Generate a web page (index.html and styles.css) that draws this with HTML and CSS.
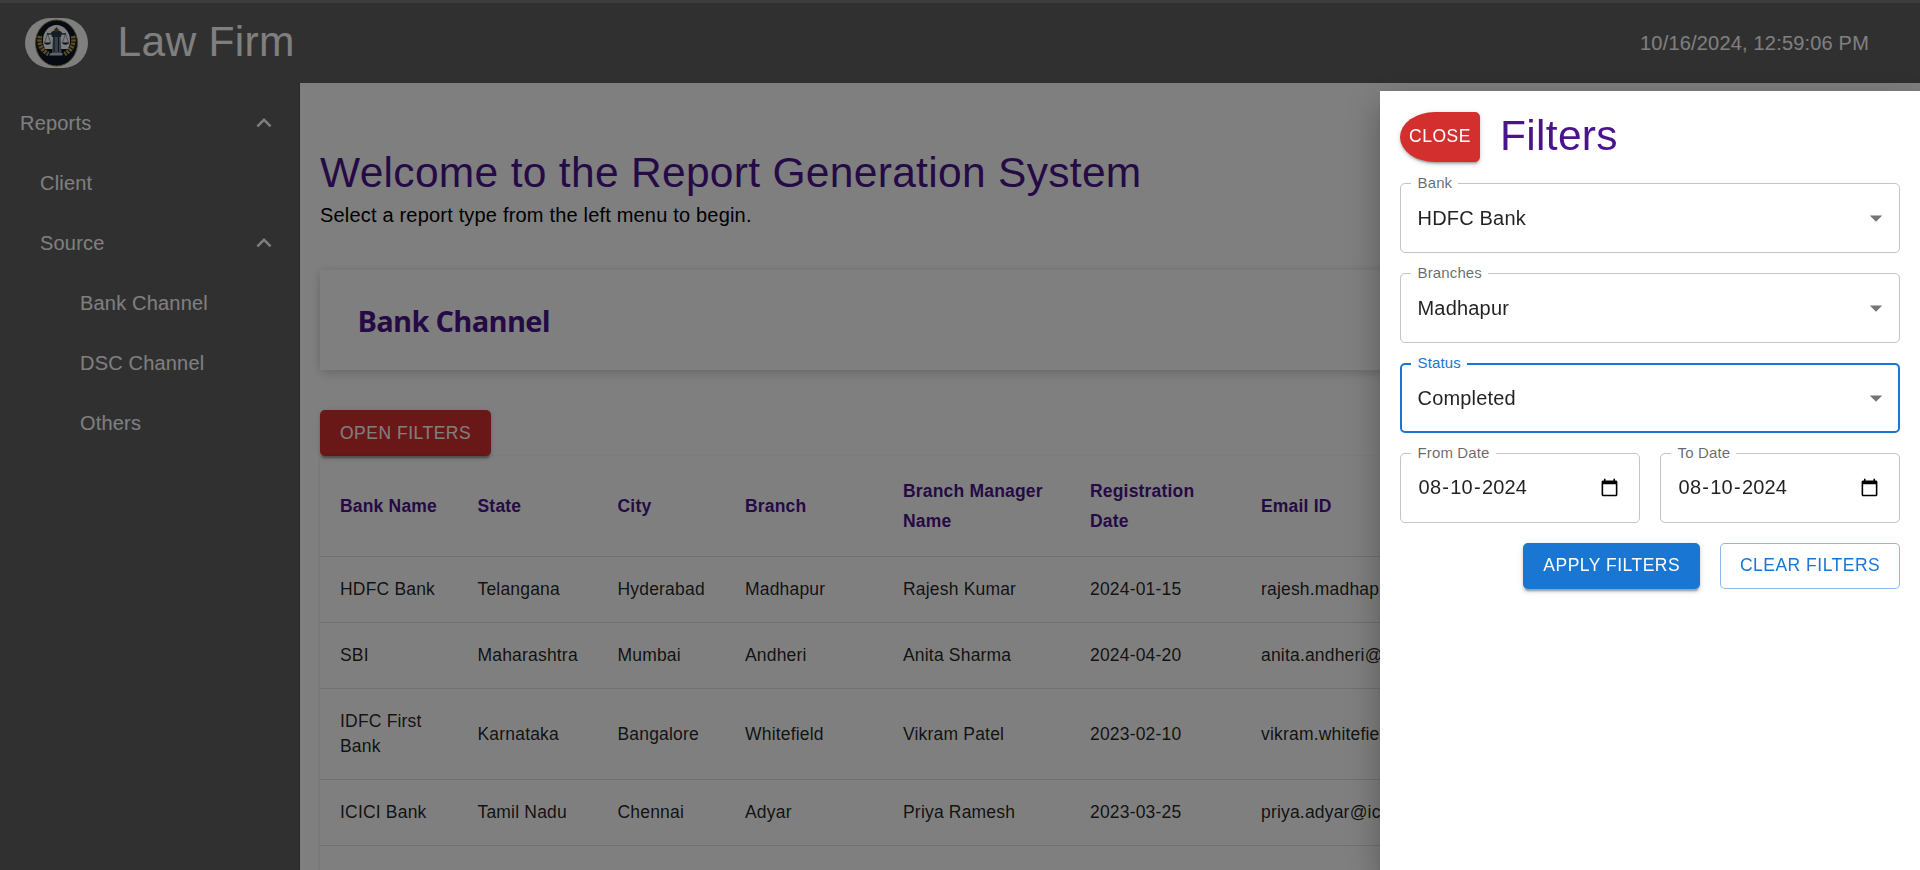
FILE: index.html
```html
<!DOCTYPE html>
<html lang="en">
<head>
<meta charset="utf-8">
<title>Law Firm</title>
<link rel="stylesheet" href="styles.css">
</head>
<body>
<div class="app">
  <header class="topbar">
    <svg class="logo" viewBox="0 0 63 50" width="63" height="50">
      <rect width="63" height="50" rx="25" fill="#fff"/>
      <ellipse cx="31.5" cy="25" rx="21" ry="23" fill="#0b1726" stroke="#8f7a45" stroke-width="1"/>
      <ellipse cx="31.5" cy="22.5" rx="13.5" ry="15.500" fill="#fff"/>
      <path d="M17.500 31h28v8h-28z" fill="#0b1726"/>
      <g fill="none" stroke="#c09a4c" stroke-width="4.500" stroke-dasharray="2.300 1">
        <path d="M15 18c-1.500 8 1 14 8.500 18"/>
        <path d="M48 18c1.500 8-1 14-8.500 18"/>
      </g>
      <path d="M28 18h7.500l1 17h-9.500z" fill="#6f8090"/>
      <path d="M29 19v15M33.500 19v15" stroke="#1a2a3c" stroke-width="1"/>
      <path d="M26 14.500c3-3 8-3 11 0l-1 4.500h-9z" fill="#2b3948"/>
      <path d="M31.500 9l2.500 3-2.500 3-2.500-3z" fill="#6b5530"/>
      <path d="M22 15.500c4 2 6-1 9.500-1s5.500 3 9.500 1" fill="none" stroke="#2b3948" stroke-width="1.500"/>
      <path d="M22.500 16l-3 8.500M22.500 16l3 8.500M40.500 16l-3 8.500M40.500 16l3 8.500" stroke="#4b5968" stroke-width=".6"/>
      <path d="M19 24.500h7c-.5 3-6.500 3-7 0zM37 24.500h7c-.5 3-6.500 3-7 0z" fill="#1a2a3c"/>
      <path d="M25.500 35h12v2.500h-13.500z" fill="#c8c8c8"/>
    </svg>
    <h1 class="brand">Law Firm</h1>
    <time class="clock">10/16/2024, 12:59:06 PM</time>
  </header>
  <div class="body">
    <nav class="sidebar">
      <a class="nav-item">Reports<svg class="chevron" viewBox="0 0 24 24"><path d="m12 8-6 6 1.410 1.410L12 10.830l4.590 4.580L18 14z"/></svg></a>
      <a class="nav-item level-1">Client</a>
      <a class="nav-item level-1">Source<svg class="chevron" viewBox="0 0 24 24"><path d="m12 8-6 6 1.410 1.410L12 10.830l4.590 4.580L18 14z"/></svg></a>
      <a class="nav-item level-2">Bank Channel</a>
      <a class="nav-item level-2">DSC Channel</a>
      <a class="nav-item level-2">Others</a>
    </nav>
    <main class="main">
      <h2 class="title">Welcome to the Report Generation System</h2>
      <p class="subtitle">Select a report type from the left menu to begin.</p>
      <section class="card"><h3 class="card-title">Bank Channel</h3></section>
      <button class="btn btn-red">Open Filters</button>
      <div class="table-wrap">
        <table class="table">
          <colgroup><col class="c-bank"><col class="c-state"><col class="c-city"><col class="c-branch"><col class="c-manager"><col class="c-date"><col class="c-email"></colgroup>
          <thead>
            <tr><th>Bank Name</th><th>State</th><th>City</th><th>Branch</th><th>Branch Manager Name</th><th>Registration Date</th><th>Email ID</th></tr>
          </thead>
          <tbody>
            <tr><td>HDFC Bank</td><td>Telangana</td><td>Hyderabad</td><td>Madhapur</td><td>Rajesh Kumar</td><td>2024-01-15</td><td>rajesh.madhap</td></tr>
            <tr><td>SBI</td><td>Maharashtra</td><td>Mumbai</td><td>Andheri</td><td>Anita Sharma</td><td>2024-04-20</td><td>anita.andheri@</td></tr>
            <tr><td>IDFC First Bank</td><td>Karnataka</td><td>Bangalore</td><td>Whitefield</td><td>Vikram Patel</td><td>2023-02-10</td><td>vikram.whitefie</td></tr>
            <tr><td>ICICI Bank</td><td>Tamil Nadu</td><td>Chennai</td><td>Adyar</td><td>Priya Ramesh</td><td>2023-03-25</td><td>priya.adyar@ic</td></tr>
          </tbody>
        </table>
      </div>
    </main>
  </div>
</div>

<div class="backdrop"></div>

<aside class="drawer">
  <div class="drawer-head">
    <button class="btn btn-red btn-close">Close</button>
    <h2 class="drawer-title">Filters</h2>
  </div>
  <div class="field">
    <span class="label">Bank</span><span class="value">HDFC Bank</span>
    <svg class="arrow" viewBox="0 0 24 24"><path d="m7 10 5 5 5-5z"/></svg>
  </div>
  <div class="field">
    <span class="label">Branches</span><span class="value">Madhapur</span>
    <svg class="arrow" viewBox="0 0 24 24"><path d="m7 10 5 5 5-5z"/></svg>
  </div>
  <div class="field focused">
    <span class="label">Status</span><span class="value">Completed</span>
    <svg class="arrow" viewBox="0 0 24 24"><path d="m7 10 5 5 5-5z"/></svg>
  </div>
  <div class="dates">
    <div class="field">
      <span class="label">From Date</span>
      <span class="value date"><span>08</span>-<span>10</span>-<span>2024</span></span>
      <svg class="calendar" viewBox="0 0 24 24"><path d="M20 3h-1V1h-2v2H7V1H5v2H4c-1.100 0-2 .9-2 2v16c0 1.100.9 2 2 2h16c1.100 0 2-.9 2-2V5c0-1.100-.9-2-2-2zm0 18H4V8h16v13z"/></svg>
    </div>
    <div class="field">
      <span class="label">To Date</span>
      <span class="value date"><span>08</span>-<span>10</span>-<span>2024</span></span>
      <svg class="calendar" viewBox="0 0 24 24"><path d="M20 3h-1V1h-2v2H7V1H5v2H4c-1.100 0-2 .9-2 2v16c0 1.100.9 2 2 2h16c1.100 0 2-.9 2-2V5c0-1.100-.9-2-2-2zm0 18H4V8h16v13z"/></svg>
    </div>
  </div>
  <div class="actions">
    <button class="btn btn-blue">Apply Filters</button>
    <button class="btn btn-outline">Clear Filters</button>
  </div>
</aside>
</body>
</html>
```

FILE: styles.css
```css
* { box-sizing: border-box; }

body {
  margin: 0;
  height: 870px;
  overflow: hidden;
  background: #fff;
  font-family: "Liberation Sans", Arial, sans-serif;
  font-size: 20px;
  letter-spacing: 0.1875px;
}

h1, h2, h3, p { margin: 0; }

.app {
  display: flex;
  flex-direction: column;
  height: 870px;
}

/* Header */
.topbar {
  display: flex;
  align-items: center;
  flex: none;
  height: 83px;
  padding: 0 51px 0 25px;
  border-top: 3px solid #797979;
  background: #616161;
  color: #fff;
}

.brand {
  margin-left: 29.5px;
  padding-bottom: 1px;
  font-size: 42.5px;
  font-weight: 400;
  line-height: 52.5px;
  letter-spacing: 0.31px;
}

.clock { margin-left: auto; }

.body {
  display: flex;
  flex: 1;
  min-height: 0;
}

/* Sidebar */
.sidebar {
  display: flex;
  flex-direction: column;
  flex: none;
  width: 300px;
  padding: 10px 0;
  border-right: 1px solid #545454;
  background: #616161;
  color: #fff;
}

.nav-item {
  display: flex;
  align-items: center;
  justify-content: space-between;
  height: 60px;
  padding: 0 20px;
}

.level-1 { padding-left: 40px; }
.level-2 { padding-left: 80px; }

.chevron {
  width: 30px;
  height: 30px;
  fill: #fff;
}

/* Content */
.main {
  flex: 1;
  min-width: 0;
  padding: 63.5px 20px 0;
}

.title {
  margin-bottom: 1px;
  color: #4a148c;
  font-size: 42.5px;
  font-weight: 400;
  line-height: 52.5px;
  letter-spacing: 0.31px;
}

.subtitle { line-height: 30px; }

.card {
  display: flex;
  align-items: center;
  height: 100px;
  margin: 40px 0;
  padding: 0 37.5px;
  background: #fff;
  box-shadow: 0 5px 10px rgba(0, 0, 0, 0.1), 0 0 10px rgba(0, 0, 0, 0.1);
}

.card-title {
  color: #4a148c;
  font-family: "Open Sans", "Noto Sans", sans-serif;
  font-size: 29px;
  font-weight: 700;
  letter-spacing: -0.7px;
}

.btn {
  display: inline-flex;
  align-items: center;
  justify-content: center;
  height: 46px;
  padding: 0 20px;
  border: 0;
  border-radius: 5px;
  color: #fff;
  font: 400 17.5px/30.6px "Liberation Sans", Arial, sans-serif;
  letter-spacing: 0.5px;
  text-transform: uppercase;
  white-space: nowrap;
  box-shadow: 0 3.75px 1.25px -2.5px rgba(0, 0, 0, 0.2), 0 2.5px 2.5px rgba(0, 0, 0, 0.14), 0 1.25px 6.25px rgba(0, 0, 0, 0.12);
}

.main .btn { display: flex; }

.btn-red { background: #d32f2f; }
.btn-blue { background: #1976d2; }

.btn-outline {
  padding: 0 18.75px;
  border: 1px solid rgba(25, 118, 210, 0.5);
  background: #fff;
  color: #1976d2;
  box-shadow: none;
}

/* Table */
.table-wrap {
  height: 420px;
  border-radius: 5px;
  box-shadow: 0 2.5px 1.25px -1.25px rgba(0, 0, 0, 0.2), 0 1.25px 1.25px rgba(0, 0, 0, 0.14), 0 1.25px 3.75px rgba(0, 0, 0, 0.12);
}

.table {
  width: 100%;
  border-collapse: separate;
  border-spacing: 0;
  table-layout: fixed;
  font-size: 17.5px;
}

.c-bank { width: 137.5px; }
.c-state { width: 140px; }
.c-city { width: 127.5px; }
.c-branch { width: 158px; }
.c-manager { width: 187px; }
.c-date { width: 171px; }

.table th,
.table td {
  padding: 20px;
  border-bottom: 1px solid #e0e0e0;
  text-align: left;
  vertical-align: middle;
}

.table th {
  color: #4a148c;
  line-height: 30px;
}

.table td {
  color: rgba(0, 0, 0, 0.87);
  line-height: 25px;
}

.backdrop {
  position: fixed;
  inset: 0;
  background: rgba(0, 0, 0, 0.5);
}

/* Filter drawer */
.drawer {
  position: fixed;
  top: 91px;
  right: 0;
  bottom: 0;
  display: flex;
  flex-direction: column;
  gap: 20px;
  width: 540px;
  padding: 20px;
  background: #fff;
  box-shadow: 0 10px 12.5px -6.25px rgba(0, 0, 0, 0.2), 0 20px 30px 2.5px rgba(0, 0, 0, 0.14), 0 7.5px 37.5px 6.25px rgba(0, 0, 0, 0.12);
}

.drawer .btn { padding-bottom: 2px; }

.drawer-head {
  display: flex;
  align-items: center;
  gap: 20px;
  height: 52px;
}

.drawer .btn-close {
  width: 80px;
  height: 50px;
  padding: 0 0 2px;
  border-radius: 35px 5px 5px 35px / 25px 5px 5px 25px;
}

.drawer-title {
  padding-bottom: 1px;
  color: #4a148c;
  font-size: 42.5px;
  font-weight: 400;
  line-height: 52.5px;
  letter-spacing: 0.31px;
}

.field {
  position: relative;
  display: flex;
  align-items: center;
  justify-content: space-between;
  flex: none;
  height: 70px;
  padding: 0 8px 0 16.5px;
  border: 1px solid rgba(0, 0, 0, 0.23);
  border-radius: 5px;
  color: rgba(0, 0, 0, 0.87);
}

.label {
  position: absolute;
  top: -11px;
  left: 10px;
  padding: 0 6px 0 6.5px;
  background: #fff;
  color: rgba(0, 0, 0, 0.6);
  font-size: 15px;
  line-height: 20px;
  letter-spacing: 0.14px;
}

.focused {
  padding: 0 7px 0 15.5px;
  border: 2px solid #1976d2;
}

.focused .label {
  top: -12px;
  left: 9px;
  color: #1976d2;
}

.arrow {
  width: 30px;
  height: 30px;
  fill: rgba(0, 0, 0, 0.54);
}

.dates {
  display: grid;
  grid-template-columns: 1fr 1fr;
  gap: 20px;
}

.date { padding-bottom: 1px; }
.date span { padding: 0 1.1px; }

.calendar {
  width: 19px;
  height: 19px;
  margin: 0 12px 2px 0;
}

.actions {
  display: flex;
  justify-content: flex-end;
  gap: 20px;
}
```
